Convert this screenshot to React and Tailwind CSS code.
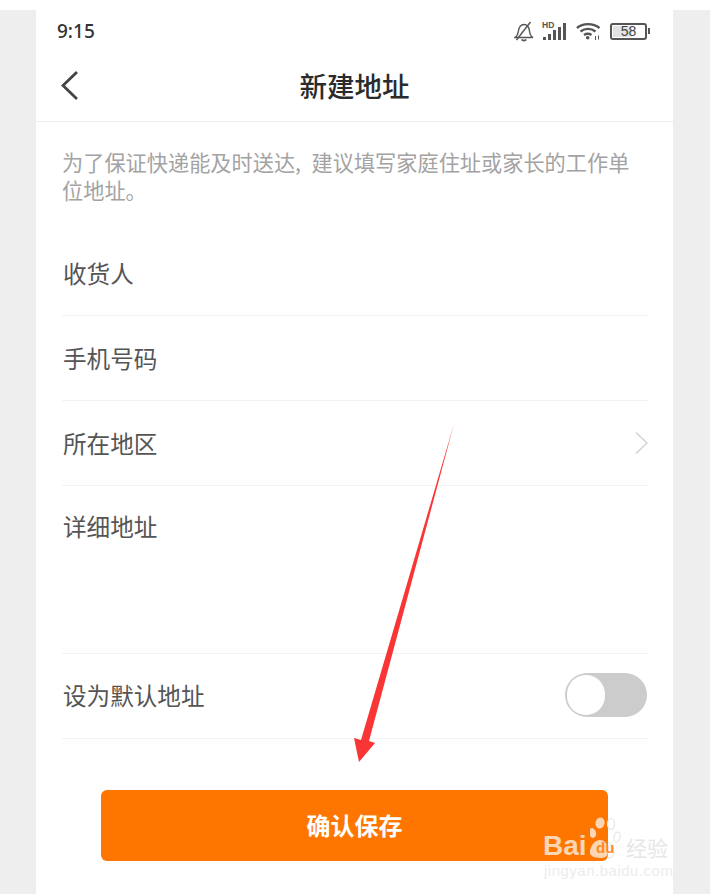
import React from "react";

const font = { fontFamily: '"Noto Sans CJK SC", "Noto Sans", sans-serif' };
const latin = { fontFamily: '"Liberation Sans", sans-serif' };

function Row({ label, className = "", children }) {
  return (
    <div className={`flex items-center justify-between border-b border-[#f2f2f2] ${className}`}>
      <span className="pl-[1px] text-[23.600px] leading-8 text-[#555555]">{label}</span>
      {children}
    </div>
  );
}

function StatusIcons() {
  return (
    <div className="flex items-center">
      <svg width="20" height="21" viewBox="0 0 20 21" fill="none" stroke="#555" strokeWidth="1.400" className="mr-[8px]">
        <path d="M1 16.500c2.200-1.300 2.800-3 3.300-6 .6-4 2.500-7 5.700-7s5 3 5.500 6.500c.4 3 1 5.300 3.500 6.500z" />
        <path d="M7.500 18.500c1.300 1.500 3.500 1.500 4.800 0" strokeWidth="1.800" />
        <path d="M2.500 19 16.500 1" />
      </svg>
      <div className="relative mr-[10px] h-[18px] w-[24px]">
        <span className="absolute left-0 top-[-2px] text-[8.500px] font-bold leading-[10px] text-[#555]" style={latin}>HD</span>
        <div className="absolute bottom-0 right-0 flex items-end gap-[2px]">
          <div className="h-[3px] w-[3px] bg-[#555]" />
          <div className="h-[6px] w-[3px] bg-[#555]" />
          <div className="h-[10px] w-[3px] bg-[#555]" />
          <div className="h-[13px] w-[3px] bg-[#555]" />
          <div className="h-[17px] w-[3px] bg-[#555]" />
        </div>
      </div>
      <svg width="25" height="18" viewBox="0 0 25 18" fill="none" stroke="#555" strokeWidth="2.400" className="mr-[9px]">
        <path d="M1 6C7 .8 17 .8 23.500 6" />
        <path d="M4.500 9.500c4.500-3.500 10.500-3.500 15 0" />
        <path d="M8 13c2.500-1.600 5-1.600 7.500 0" />
        <circle cx="11.700" cy="15.700" r="1.800" fill="#555" stroke="none" />
        <path d="M19.500 14v4M22.500 13.500v4" strokeWidth="1" />
      </svg>
      <div className="flex items-center">
        <div className="relative flex h-[17px] w-[37px] items-center justify-center overflow-hidden rounded-[3px] border-2 border-[#555]">
          <div className="absolute bottom-[1px] left-[1px] top-[1px] w-[58%] bg-[#e2e2e2]" />
          <span className="relative text-[14px] leading-none text-[#444]" style={latin}>58</span>
        </div>
        <div className="ml-[1px] h-[6px] w-[2px] bg-[#555]" />
      </div>
    </div>
  );
}

function Watermark() {
  return (
    <div className="pointer-events-none absolute left-[544px] top-[817px] h-[62px] w-[128px]">
      <svg width="40" height="44" viewBox="0 0 40 44" className="absolute left-[46px] top-0">
        <g fill="#fbd6b4">
          <ellipse cx="10" cy="6" rx="4.500" ry="5.500" transform="rotate(12 10 6)" />
          <ellipse cx="2.500" cy="16" rx="3.500" ry="5" transform="rotate(-15 2.500 16)" />
          <path d="M0 34c1-6 5-11 10-11s8 4 8 11c0 5-2 7-8 7s-11-2-10-7z" />
        </g>
        <g fill="none" stroke="#e6e6e6" strokeWidth="1.200">
          <ellipse cx="21" cy="7" rx="3.500" ry="5.500" />
          <ellipse cx="27" cy="20" rx="3" ry="5" transform="rotate(15 27 20)" />
          <path d="M18 25c3 2 6 7 6 10s-2 6-6 6" />
        </g>
      </svg>
      <span className="absolute left-[-1px] top-[15px] text-[28px] font-bold leading-[28px] text-[#fbd6b4]" style={latin}>Bai</span>
      <span className="absolute left-[52px] top-[22px] text-[15px] font-bold leading-[18px] text-[#ff8a1f]" style={latin}>du</span>
      <span className="absolute left-[82px] top-[17px] text-[21px] leading-[26px] text-[#e6e6e6]" style={font}>经验</span>
      <span className="absolute left-0 top-[46px] whitespace-nowrap text-[15px] leading-[16px] tracking-[0.500px] text-[#ececec]" style={latin}>jingyan.baidu.com</span>
    </div>
  );
}

function Arrow() {
  return (
    <svg width="710" height="894" viewBox="0 0 710 894" className="pointer-events-none absolute left-0 top-0">
      <polygon points="454,424 369,741 375,743 359,762 354,738 361,740" fill="#f93535" />
    </svg>
  );
}

export default function App() {
  return (
    <div className="relative h-[894px] w-[710px] overflow-hidden bg-white" style={font}>
      <div className="mt-[10px] h-[884px] bg-[#eeeeee] pl-[36px]">
        <div className="flex h-full w-[637px] flex-col bg-white">
          <div className="flex h-[45px] shrink-0 items-center justify-between pb-[3px] pl-[21px] pr-[23px]">
            <span className="text-[19px] font-medium leading-6 text-[#333]" style={{ fontFamily: '"Noto Sans", sans-serif' }}>9:15</span>
            <StatusIcons />
          </div>
          <div className="relative flex h-[67px] shrink-0 items-center justify-center border-b border-[#eeeeee] pb-[7px]">
            <svg width="18" height="31" viewBox="0 0 18 31" fill="none" stroke="#444" strokeWidth="2.800" className="absolute left-[24px] top-[15px]">
              <path d="M17 2 3 15.500 17 29" />
            </svg>
            <span className="text-[27.500px] font-medium leading-9 text-[#2b2b2b]">新建地址</span>
          </div>
          <div className="flex flex-1 flex-col pl-[26px] pr-[25px]">
            <p className="mt-[26px] text-[21.200px] leading-[28px] text-[#a3a3a3]">为了保证快递能及时送达,&#8194;建议填写家庭住址或家长的工作单位地址。</p>
            <Row label="收货人" className="mt-[24px] h-[88px] pt-[2px]" />
            <Row label="手机号码" className="h-[85px]" />
            <Row label="所在地区" className="h-[85px]">
              <svg width="14" height="24" viewBox="0 0 14 24" fill="none" stroke="#d2d2d2" strokeWidth="1.500">
                <path d="M2 1.500 13 12 2 22.500" />
              </svg>
            </Row>
            <Row label="详细地址" className="h-[168px] items-start pt-[24px]" />
            <Row label="设为默认地址" className="h-[85px] pb-[2px]">
              <div className="mr-[1px] h-[44px] w-[82px] rounded-full bg-[#cccccc] p-[2px]">
                <div className="h-[40px] w-[38px] rounded-full bg-white" />
              </div>
            </Row>
            <div className="ml-[39px] mt-[51px] flex h-[71px] w-[507px] items-center justify-center rounded-[6px] bg-[#fe7600] pb-[2px]">
              <span className="text-[24px] font-bold leading-8 text-white">确认保存</span>
            </div>
          </div>
        </div>
      </div>
      <Arrow />
      <Watermark />
    </div>
  );
}
